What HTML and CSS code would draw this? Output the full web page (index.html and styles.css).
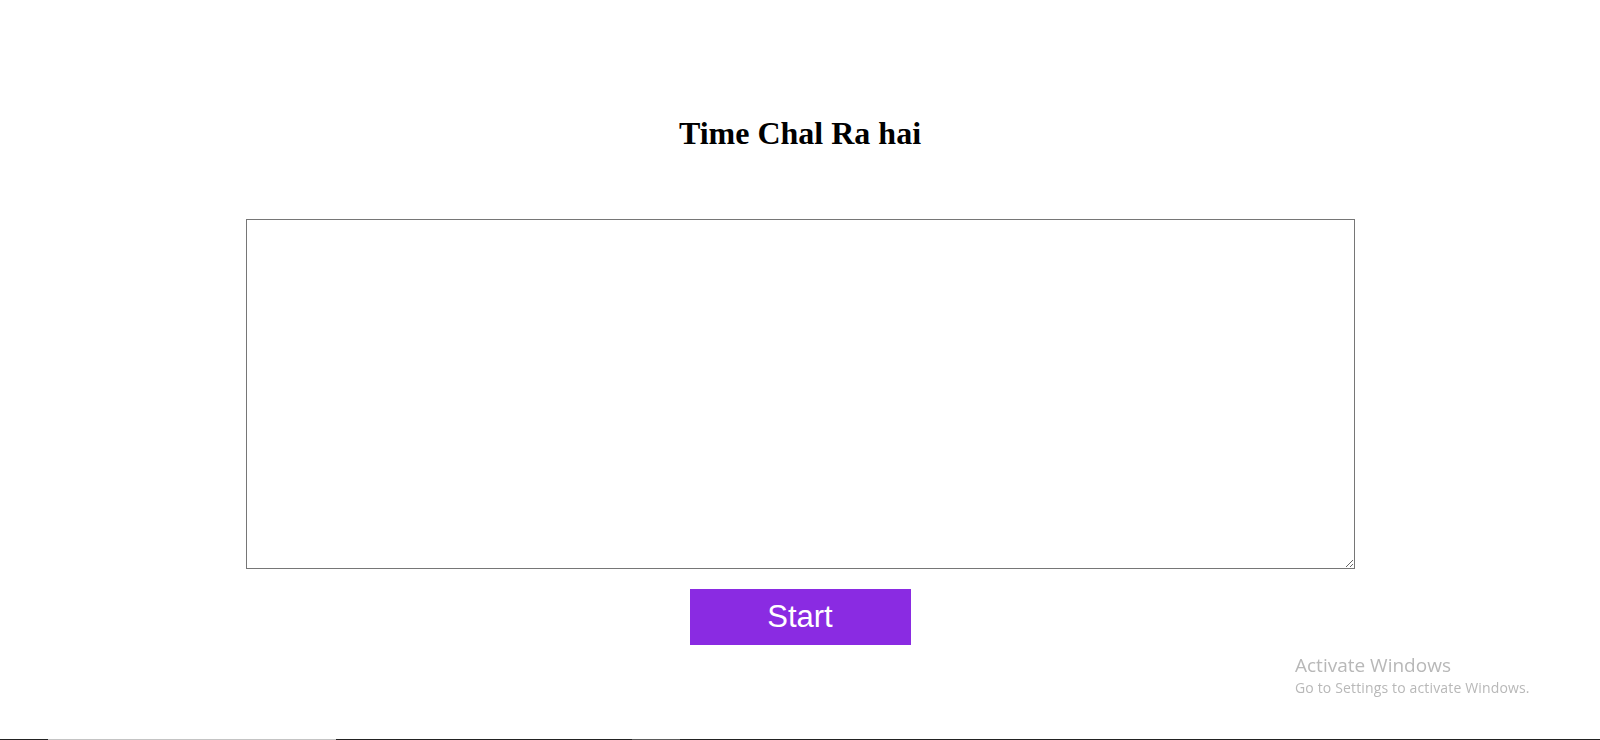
FILE: index.html
```html
<!DOCTYPE html>
<html lang="en">
<head>
<meta charset="utf-8">
<title>Time Chal Ra hai</title>
<link rel="stylesheet" href="styles.css">
</head>
<body>
<main class="page">
  <h1 class="title">Time Chal Ra hai</h1>
  <textarea class="editor"></textarea>
  <button class="start-btn">Start</button>
</main>
<div class="watermark">
  <div class="wm-title">Activate Windows</div>
  <div class="wm-sub">Go to Settings to activate Windows.</div>
</div>
<div class="taskbar-edge">
  <span class="seg dark s1"></span>
  <span class="seg light s2"></span>
  <span class="seg dark s3"></span>
  <span class="seg mid s4"></span>
  <span class="seg dark s5"></span>
</div>
</body>
</html>
```

FILE: styles.css
```css
html, body {
  margin: 0;
  padding: 0;
  background: #ffffff;
  height: 100%;
  overflow: hidden;
}

.page {
  display: flex;
  flex-direction: column;
  align-items: center;
  padding-top: 115px;
}

.title {
  margin: 0;
  font-family: "Liberation Serif", "Times New Roman", serif;
  font-weight: bold;
  font-size: 32px;
  line-height: 37px;
  color: #000;
}

.editor {
  margin-top: 67px;
  width: 1109px;
  height: 350px;
  box-sizing: border-box;
  border: 1px solid #767676;
  background: #fff;
  padding: 2px;
}

.start-btn {
  margin-top: 20px;
  width: 221px;
  height: 56px;
  background: #8a2be2;
  color: #ffffff;
  border: none;
  padding: 0;
  font-family: "Liberation Sans", Arial, sans-serif;
  font-size: 31px;
}

.watermark {
  position: fixed;
  left: 1295px;
  top: 652px;
  color: #b8b8b8;
  font-family: "Open Sans", "Noto Sans", sans-serif;
}

.wm-title {
  font-size: 19px;
  line-height: 26px;
}

.wm-sub {
  font-size: 14px;
  line-height: 20px;
  letter-spacing: 0.15px;
}

.taskbar-edge {
  position: fixed;
  left: 0;
  right: 0;
  bottom: 0;
  height: 1px;
  display: flex;
}

.seg { display: block; height: 1px; }
.dark { background: #222222; }
.light { background: #c4c4c4; }
.mid { background: #5a5a5a; }
.s1 { width: 48px; }
.s2 { width: 288px; }
.s3 { width: 296px; }
.s4 { width: 48px; }
.s5 { flex: 1; }
```
